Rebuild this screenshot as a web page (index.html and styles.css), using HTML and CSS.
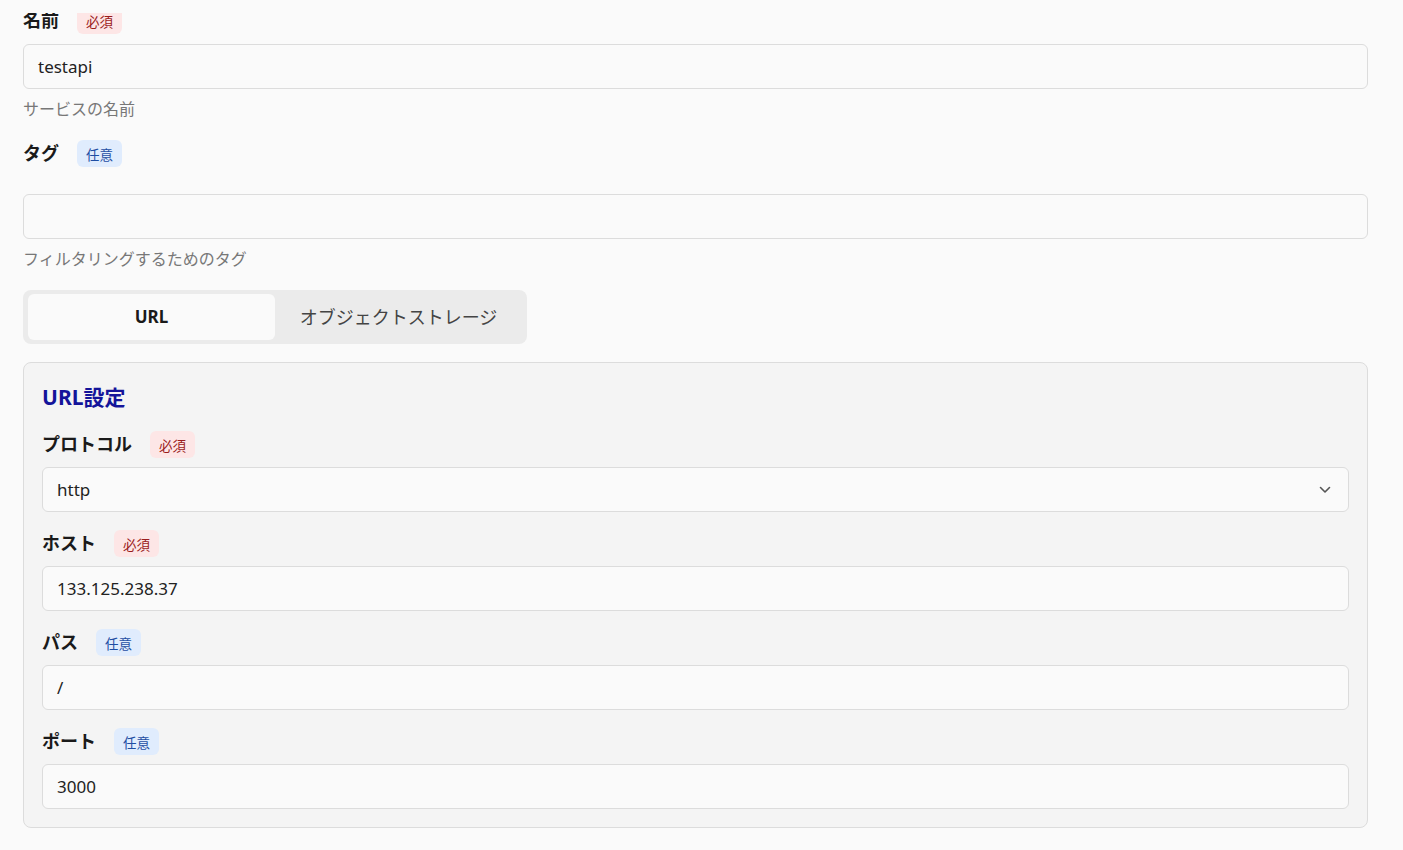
FILE: index.html
```html
<!DOCTYPE html>
<html lang="ja">
<head>
<meta charset="utf-8">
<link rel="stylesheet" href="styles.css">
</head>
<body>
<div class="top-mask"></div>
<main class="form">
  <div class="field">
    <div class="label-row"><span class="label">名前</span><span class="badge req">必須</span></div>
    <div class="input">testapi</div>
    <div class="help">サービスの名前</div>
  </div>
  <div class="field">
    <div class="label-row"><span class="label">タグ</span><span class="badge opt">任意</span></div>
    <div class="tag-list"></div>
    <div class="input"></div>
    <div class="help">フィルタリングするためのタグ</div>
  </div>
  <div class="tabs">
    <div class="tab active">URL</div>
    <div class="tab">オブジェクトストレージ</div>
  </div>
  <section class="card">
    <h2 class="card-title">URL設定</h2>
    <div class="cfield">
      <div class="label-row"><span class="label">プロトコル</span><span class="badge req">必須</span></div>
      <div class="input select">http
        <svg class="chev" width="12" height="8" viewBox="0 0 12 8"><path d="M1.5 1.5 L6 6 L10.5 1.5" fill="none" stroke="#555" stroke-width="1.6" stroke-linecap="round" stroke-linejoin="round"/></svg>
      </div>
    </div>
    <div class="cfield">
      <div class="label-row"><span class="label">ホスト</span><span class="badge req">必須</span></div>
      <div class="input">133.125.238.37</div>
    </div>
    <div class="cfield">
      <div class="label-row"><span class="label">パス</span><span class="badge opt">任意</span></div>
      <div class="input">/</div>
    </div>
    <div class="cfield">
      <div class="label-row"><span class="label">ポート</span><span class="badge opt">任意</span></div>
      <div class="input">3000</div>
    </div>
  </section>
</main>
</body>
</html>
```
FILE: styles.css
```css
html, body {
  margin: 0;
  background: #fafafa;
}
body {
  font-family: "Noto Sans", "Noto Sans CJK JP", sans-serif;
  color: #1a1a1a;
}
.top-mask {
  position: fixed;
  top: 0;
  left: 0;
  right: 0;
  height: 13px;
  background: #fafafa;
  z-index: 5;
}
.form {
  width: 1345px;
  padding: 7px 0 0 23px;
}
.field {
  margin-bottom: 19px;
}
.label-row {
  display: flex;
  align-items: center;
  height: 27px;
  margin-bottom: 10px;
}
.label {
  font-size: 18px;
  line-height: 24px;
  font-weight: 700;
  color: #1a1a1a;
  margin-right: 18px;
  margin-top: -2px;
}
.badge {
  display: inline-flex;
  align-items: center;
  justify-content: center;
  height: 27px;
  padding: 0 9px;
  border-radius: 6px;
  font-size: 13.5px;
  box-sizing: border-box;
}
.badge.req {
  background: #fde6e6;
  color: #9b1c1c;
}
.badge.opt {
  background: #e0ecfd;
  color: #1e4ea3;
}
.input {
  height: 45px;
  box-sizing: border-box;
  border: 1px solid #dcdcdc;
  border-radius: 6px;
  background: #fafafa;
  padding: 0 14px;
  display: flex;
  align-items: center;
  font-size: 17px;
  color: #222;
}
.select {
  justify-content: space-between;
}
.chev {
  margin-right: 3px;
}
.tag-list {
  height: 17px;
}
.help {
  margin-top: 8px;
  font-size: 16px;
  line-height: 24px;
  color: #777;
}
.tabs {
  display: inline-flex;
  background: #ebebeb;
  border-radius: 8px;
  padding: 4px 5px;
  height: 54px;
  box-sizing: border-box;
  width: 504px;
  margin-bottom: 18px;
}
.tab {
  flex: 1;
  display: flex;
  align-items: center;
  justify-content: center;
  font-size: 18px;
  color: #444;
  border-radius: 6px;
  padding-bottom: 3px;
}
.tab.active {
  background: #fafafa;
  font-weight: 700;
  font-size: 17px;
  color: #1a1a1a;
  flex: 0 0 247px;
  padding-bottom: 2px;
}
.card {
  background: #f4f4f4;
  border: 1px solid #dcdcdc;
  border-radius: 8px;
  padding: 20px 18px 18px;
}
.card-title {
  margin: 0 0 18px;
  font-size: 21px;
  line-height: 28px;
  padding-bottom: 2px;
  font-weight: 700;
  color: #14149a;
}
.cfield + .cfield {
  margin-top: 18px;
}
.cfield .label-row {
  margin-bottom: 9px;
}
```
